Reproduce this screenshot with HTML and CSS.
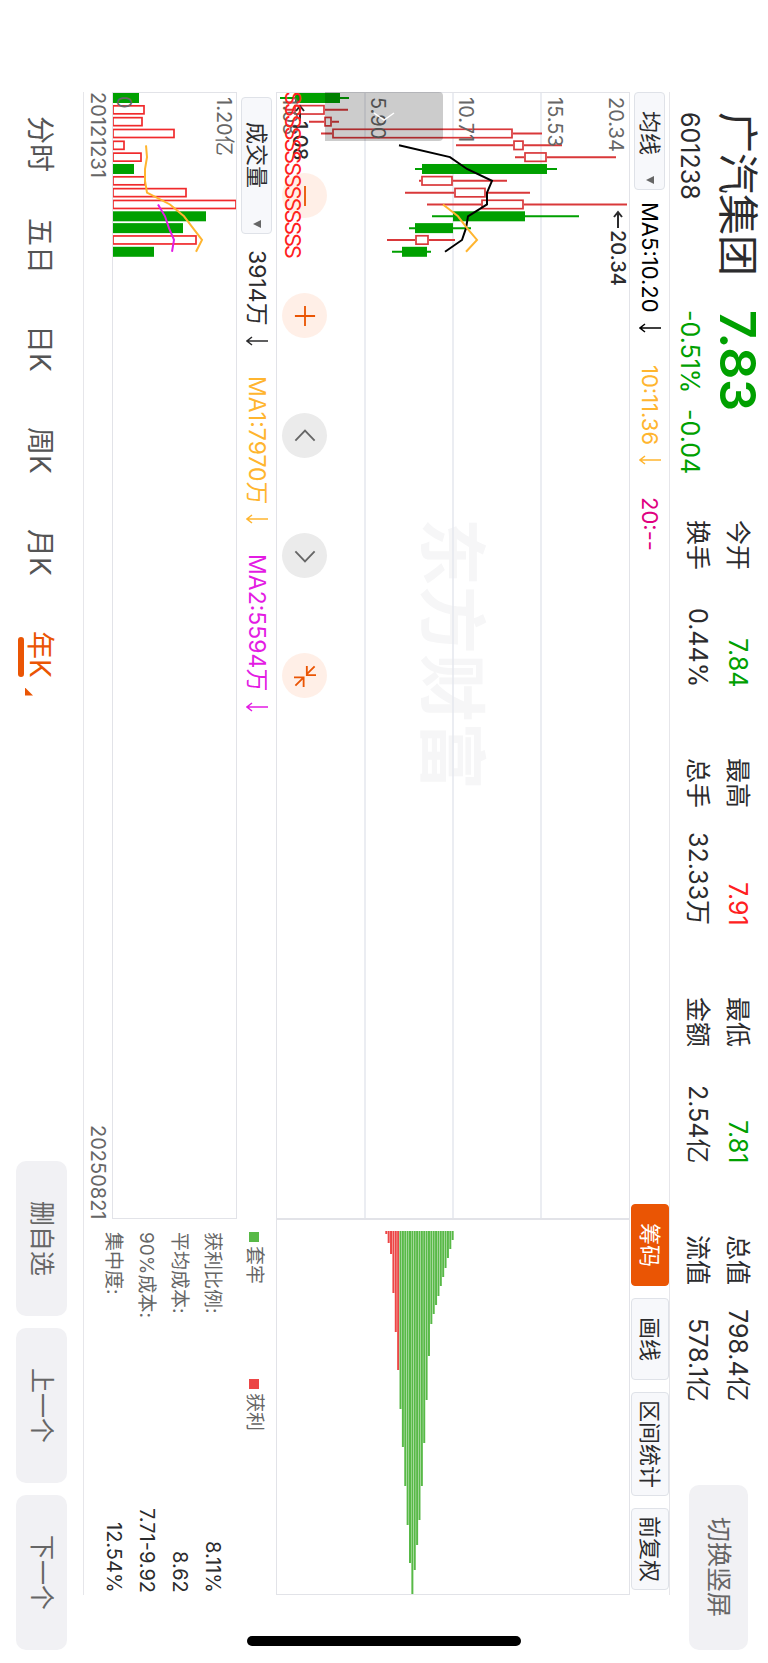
FILE: index.html
```html
<!DOCTYPE html>
<html lang="zh-CN">
<head>
    <meta charset="UTF-8">
    <meta name="viewport" content="width=device-width, initial-scale=1.0">
    <title>广汽集团 601238</title>
    <link rel="stylesheet" href="styles.css">
</head>
<body>
    <div class="app">
        <!-- Quote header -->
        <header class="header">
            <div class="stock">
                <h1 class="stock-name">广汽集团</h1>
                <div class="stock-code">601238</div>
            </div>
            <div class="price">
                <div class="price-now">7.83</div>
                <div class="price-change"><span>-0.51%</span><span>-0.04</span></div>
            </div>
            <dl class="stats">
                <div class="stat"><dt>今开</dt><dd class="down">7.84</dd></div>
                <div class="stat"><dt>最高</dt><dd class="up">7.91</dd></div>
                <div class="stat"><dt>最低</dt><dd class="down">7.81</dd></div>
                <div class="stat"><dt>总值</dt><dd>798.4亿</dd></div>
                <div class="stat"><dt>换手</dt><dd>0.44%</dd></div>
                <div class="stat"><dt>总手</dt><dd>32.33万</dd></div>
                <div class="stat"><dt>金额</dt><dd>2.54亿</dd></div>
                <div class="stat"><dt>流值</dt><dd>578.1亿</dd></div>
            </dl>
            <button class="soft-btn switch-btn" type="button">切换竖屏</button>
        </header>

        <!-- Charts -->
        <main class="panel">
            <div class="toolbar">
                <div class="picker">
                    <select class="picker-select" aria-label="主图指标">
                        <option>均线</option>
                    </select>
                </div>
                <div class="legend">
                    <span class="legend-item black">MA5:10.20<svg class="arrow" viewBox="0 0 22 10"><path d="M22 5H1M6 1L1 5l5 4"/></svg></span>
                    <span class="legend-item orange">10:11.36<svg class="arrow" viewBox="0 0 22 10"><path d="M22 5H1M6 1L1 5l5 4"/></svg></span>
                    <span class="legend-item pink">20:--</span>
                </div>
                <div class="tools">
                    <button class="tool-btn active" type="button">筹码</button>
                    <button class="tool-btn" type="button">画线</button>
                    <button class="tool-btn tight" type="button">区间统计</button>
                    <button class="tool-btn tight" type="button">前复权</button>
                </div>
            </div>

            <section class="kline">
                <svg class="chart" id="kline" viewBox="0 0 354 1126" preserveAspectRatio="xMidYMin meet"></svg>
                <button class="drawer-btn" type="button" aria-label="展开">
                    <svg viewBox="0 0 22 10"><path d="M1 1l10 7 10-7"/></svg>
                </button>
                <div class="zoom-tools">
                    <button class="round-btn" type="button" aria-label="缩小">
                        <svg viewBox="0 0 24 24"><path d="M12 1v22"/></svg>
                    </button>
                    <button class="round-btn" type="button" aria-label="放大">
                        <svg viewBox="0 0 24 24"><path d="M12 1v22M1 12h22"/></svg>
                    </button>
                    <button class="round-btn gray" type="button" aria-label="左移">
                        <svg viewBox="0 0 24 24"><path d="M1.500 17L12 6l10.500 11"/></svg>
                    </button>
                    <button class="round-btn gray" type="button" aria-label="右移">
                        <svg viewBox="0 0 24 24"><path d="M1.500 7L12 18 22.500 7"/></svg>
                    </button>
                    <button class="round-btn" type="button" aria-label="收起">
                        <svg viewBox="0 0 24 24"><path d="M22.500 1.500L14 10M14 1v10h10M1.500 22.500L10 14M0 13.500h10.500V24"/></svg>
                    </button>
                </div>
            </section>

            <section class="chips">
                <svg class="chart" id="chips" viewBox="0 0 354 376" preserveAspectRatio="xMidYMin meet"></svg>
            </section>

            <div class="volume-bar">
                <div class="picker wide">
                    <select class="picker-select" aria-label="副图指标">
                        <option>成交量</option>
                    </select>
                </div>
                <div class="legend">
                    <span class="legend-item">3914万<svg class="arrow" viewBox="0 0 22 10"><path d="M22 5H1M6 1L1 5l5 4"/></svg></span>
                    <span class="legend-item orange">MA1:7970万<svg class="arrow" viewBox="0 0 22 10"><path d="M22 5H1M6 1L1 5l5 4"/></svg></span>
                    <span class="legend-item magenta">MA2:5594万<svg class="arrow" viewBox="0 0 22 10"><path d="M22 5H1M6 1L1 5l5 4"/></svg></span>
                </div>
            </div>

            <section class="volume">
                <svg class="chart" id="volume" viewBox="0 0 125 1126" preserveAspectRatio="xMidYMin meet"></svg>
            </section>

            <div class="dates"><span>20121231</span><span>20250821</span></div>

            <aside class="cost">
                <div class="cost-legend">
                    <span class="cost-key trapped">套牢</span>
                    <span class="cost-key profit">获利</span>
                </div>
                <dl class="cost-list">
                    <div><dt>获利比例:</dt><dd>8.11%</dd></div>
                    <div><dt>平均成本:</dt><dd>8.62</dd></div>
                    <div><dt>90%成本:</dt><dd>7.71-9.92</dd></div>
                    <div><dt>集中度:</dt><dd>12.54%</dd></div>
                </dl>
            </aside>
        </main>

        <!-- Period tabs -->
        <footer class="footer">
            <nav class="tabs">
                <button class="tab" type="button">分时</button>
                <button class="tab" type="button">五日</button>
                <button class="tab" type="button">日K</button>
                <button class="tab" type="button">周K</button>
                <button class="tab" type="button">月K</button>
                <button class="tab active" type="button"><span>年K</span></button>
            </nav>
            <div class="actions">
                <button class="soft-btn" type="button">删自选</button>
                <button class="soft-btn" type="button">上一个</button>
                <button class="soft-btn" type="button">下一个</button>
            </div>
        </footer>

        <div class="home-indicator"></div>
    </div>

    <script src="charts.js"></script>
</body>
</html>
```
FILE: styles.css
```css
* {
    margin: 0;
    padding: 0;
    box-sizing: border-box;
}

/* The whole app is laid out sideways: inline = top to bottom, block = right to left */
html {
    writing-mode: vertical-rl;
    text-orientation: sideways;
}

body {
    font-family: Inter, "Noto Sans CJK SC", sans-serif;
    font-size: 22px;
    color: #2b2b2d;
    background: #fff;
    overflow: hidden;
}

button,
select {
    font: inherit;
    color: inherit;
    writing-mode: vertical-rl;
    text-orientation: sideways;
    border: none;
    background: none;
    cursor: pointer;
}

svg {
    display: block;
    writing-mode: horizontal-tb;
    fill: none;
    stroke: currentColor;
}

.app {
    position: relative;
    display: flex;
    flex-direction: column;
    inline-size: 100vh;
    block-size: 100vw;
}

/* Header */
.header {
    display: flex;
    align-items: flex-start;
    padding-block-start: 10px;
    padding-inline: 112px 13px;
    line-height: 40px;
    font-size: 25px;
}

.stock {
    flex: none;
    margin-inline-end: 34px;
}

.stock-name {
    font-size: 41px;
    font-weight: 400;
    line-height: 40px;
}

.stock-code,
.price-change {
    margin-block-start: 8px;
}

.price {
    flex: none;
    inline-size: 210px;
    color: #00a000;
}

.price-now {
    font-size: 50px;
    font-weight: 600;
}

.price-change {
    display: flex;
    gap: 16px;
}

.stats {
    flex: 1;
    display: grid;
    grid-template-columns: repeat(4, 1fr);
    column-gap: 71px;
    margin-inline-end: 83px;
}

.stat {
    display: flex;
    justify-content: space-between;
    white-space: nowrap;
}

.up {
    color: #ff2020;
}

.down {
    color: #00a000;
}

.soft-btn {
    flex: none;
    inline-size: 155px;
    block-size: 51px;
    border-radius: 10px;
    background: #f1f1f4;
    color: #666;
    font-size: 25px;
    line-height: 40px;
}

.switch-btn {
    inline-size: 165px;
    block-size: 59px;
    margin-block-start: 10px;
}

/* Chart panel */
.panel {
    flex: 1;
    min-block-size: 0;
    display: grid;
    grid-template-columns: 3fr 1fr;
    grid-template-rows: 39px minmax(0, 354fr) 39px minmax(0, 125fr) 28px;
    margin-inline: 92px 68px;
    border-block: 1px solid #e6e6ea;
}

.toolbar {
    grid-column: 1 / 3;
    display: flex;
    align-items: center;
}

.picker {
    position: relative;
    inline-size: 98px;
    block-size: 31px;
}

.picker.wide {
    inline-size: 137px;
}

.picker::after {
    content: "";
    position: absolute;
    inset-inline-end: 6px;
    inset-block-start: 11px;
    inline-size: 8px;
    block-size: 8px;
    background: #666;
    clip-path: polygon(0 50%, 100% 0, 100% 100%);
    pointer-events: none;
}

.picker-select {
    appearance: none;
    inline-size: 100%;
    block-size: 100%;
    padding-inline-start: 18px;
    border: 1px solid #dfe2e8;
    border-radius: 4px;
    background: #f7f8fb;
    line-height: 29px;
}

.wide .picker-select {
    padding-inline-start: 24px;
}

.legend {
    flex: 1;
    display: flex;
    gap: 32px;
    padding-inline-start: 12px;
}

.legend-item {
    display: flex;
    align-items: center;
    gap: 10px;
    line-height: 28px;
}

.arrow {
    width: 22px;
    height: 10px;
    stroke-width: 1.5;
}

.black { color: #000; }
.orange { color: #ffb52f; }
.pink { color: #e0007f; }
.magenta { color: #e31be3; }

.tools {
    display: flex;
    gap: 12px;
    margin-inline-end: 5px;
}

.tool-btn {
    block-size: 38px;
    padding-inline: 18px;
    border: 1px solid #dfe2e8;
    border-radius: 4px;
    background: #f7f8fb;
    line-height: 36px;
}

.tool-btn.tight {
    padding-inline: 7px;
}

.tool-btn.active {
    border-color: #ea5504;
    background: #ea5504;
    color: #fff;
}

/* Outlines keep the frame out of the charts' scale */
.kline,
.chips,
.volume {
    outline: 1px solid #e2e3e8;
    outline-offset: -1px;
}

.kline {
    position: relative;
}

.chart {
    width: 100%;
    height: 100%;
}

.chart text {
    fill: #666;
    stroke: none;
    font-size: 20px;
}

.chart .watermark {
    fill: #f6f6f7;
    font-size: 68px;
    font-weight: 700;
}

.chart .note {
    fill: #2b2b2d;
    font-weight: 500;
}

.chart .mark {
    fill: #ff2020;
    font-size: 22px;
    text-anchor: middle;
}

/* Floating controls over the k-line */
.drawer-btn {
    position: absolute;
    inset-inline-start: 0;
    inset-block-end: 49px;
    inline-size: 49px;
    block-size: 118px;
    display: flex;
    align-items: center;
    justify-content: center;
    border-radius: 0 4px 4px 0;
    background: rgba(0, 0, 0, 0.2);
    color: #fff;
}

.drawer-btn svg {
    width: 22px;
    height: 10px;
    stroke-width: 1.5;
}

.zoom-tools {
    position: absolute;
    inset-inline-start: 81px;
    inset-block-end: 6px;
    display: flex;
    gap: 75px;
}

.round-btn {
    display: flex;
    align-items: center;
    justify-content: center;
    inline-size: 45px;
    block-size: 45px;
    border-radius: 50%;
    background: rgba(255, 100, 20, 0.1);
    color: #ea5504;
}

.round-btn.gray {
    background: #ebebeb;
    color: #666;
}

.round-btn svg {
    width: 22px;
    height: 22px;
    stroke-width: 2;
}

/* Volume */
.volume-bar {
    display: flex;
    align-items: center;
    padding-inline-start: 5px;
}

.volume-bar .legend {
    padding-inline-start: 16px;
    gap: 30px;
    font-size: 23px;
}

.dates {
    display: flex;
    justify-content: space-between;
    font-size: 20px;
    line-height: 28px;
    color: #666;
}

/* Cost distribution summary */
.cost {
    grid-column: 2;
    grid-row: 3 / 6;
    padding-inline: 13px 2px;
    padding-block-start: 8px;
    font-size: 19px;
}

.cost-legend {
    display: grid;
    grid-template-columns: 147px 1fr;
    line-height: 28px;
    margin-block-end: 11px;
    color: #666;
}

.cost-key {
    display: flex;
    align-items: center;
    gap: 4px;
}

.cost-key::before {
    content: "";
    inline-size: 10px;
    block-size: 10px;
}

.trapped::before {
    background: #58b947;
}

.profit::before {
    background: #ec4646;
}

.cost-list div {
    display: flex;
    justify-content: space-between;
    line-height: 33px;
}

.cost-list dt {
    color: #666;
}

.cost-list dd {
    font-size: 20px;
}

/* Footer */
.footer {
    display: flex;
    align-items: center;
    justify-content: space-between;
    block-size: 83px;
    padding-inline: 93px 13px;
}

.tabs {
    display: flex;
    margin-block-start: 3px;
}

.tab {
    inline-size: 102px;
    font-size: 28px;
    line-height: 40px;
    color: #555;
}

.tab.active {
    color: #ea5504;
}

.tab span {
    position: relative;
}

.tab span::before {
    content: "";
    position: absolute;
    inset-inline-start: 6px;
    inset-block-end: -5px;
    inline-size: 40px;
    block-size: 6px;
    border-radius: 3px;
    background: #ea5504;
}

.tab span::after {
    content: "";
    position: absolute;
    inset-inline-start: 57px;
    inset-block-end: 2px;
    inline-size: 8px;
    block-size: 8px;
    background: #ea5504;
    clip-path: polygon(0 0, 100% 100%, 0 100%);
}

.actions {
    display: flex;
    gap: 12px;
}

.home-indicator {
    position: absolute;
    inset-inline-end: 17px;
    inset-block-start: 50%;
    inline-size: 10px;
    block-size: 274px;
    border-radius: 5px;
    background: #000;
    transform: translateX(50%);
}
```
FILE: charts.js
```js
const RED = '#d9383a';
const GREEN = '#00a000';
const STEP = 11.83;
const center = i => 6 + i * STEP;

// [up?, low, bodyLow, bodyHigh, high] measured from the chart's bottom edge
const candles = [
    [0, 4, 19, 64, 73],
    [1, 9, 18, 49, 72],
    [1, 33, 48, 56, 63],
    [1, 45, 56, 237, 266],
    [1, 180, 237, 248, 286],
    [1, 239, 248, 271, 340],
    [0, 139, 146, 271, 281],
    [1, 143, 145, 177, 231],
    [1, 129, 178, 210, 254],
    [1, 151, 205, 248, 351],
    [0, 156, 177, 249, 303],
    [0, 133, 139, 177, 195],
    [1, 111, 139, 153, 179],
    [0, 116, 126, 151, 155]
];
const ma5 = [null, null, null, null, 123, 174, 191, 216, 211, 211, 192, 190, 186, 169];
const ma10 = [null, null, null, null, null, null, null, null, null, 167, 182, 191, 201, 190];

const volumes = [27, 33, 31, 63, 13, 30, 22, 34, 75, 125, 94, 71, 85, 42];
const volMa1 = [null, null, null, null, 34, 35, 33, 33, 35, 58, 72, 81, 90, 84];
const volMa2 = [null, null, null, null, null, null, null, null, null, 46, 53, 57, 62, 60];

const chips = [
    15, 24, 35, 74, 113, 151,
    190, 228, 267, 306, 344, 375, 351, 326, 301, 267, 224, 181, 137,
    105, 95, 86, 77, 67, 58, 49, 39, 30, 21
];

// Everything is drawn in landscape coordinates and turned once
function render(id, height, content) {
    document.getElementById(id).innerHTML =
        `<g transform="translate(${height} 0) rotate(90)">${content}</g>`;
}

function line(data, height, color, width) {
    const points = data
        .map((v, i) => (v === null ? null : `${center(i)},${height - v}`))
        .filter(Boolean)
        .join(' ');
    return `<polyline points="${points}" stroke="${color}" stroke-width="${width}"/>`;
}

function label(x, y, text, cls = '') {
    return `<text x="${x}" y="${y}" class="${cls}">${text}</text>`;
}

function drawKline() {
    const h = 354;
    let out = label(426, 203, '东方财富', 'watermark');
    [89, 177, 265].forEach(y => {
        out += `<path d="M0 ${y}H1126" stroke="#e4e7ee" stroke-width="1.5"/>`;
    });
    candles.forEach(([up, low, from, to, high], i) => {
        const x = center(i);
        const color = up ? RED : GREEN;
        out += `<path d="M${x} ${h - low}V${h - from}M${x} ${h - to}V${h - high}" stroke="${color}" stroke-width="2"/>`;
        out += up
            ? `<rect x="${x - 4.2}" y="${h - to + 1}" width="8.4" height="${to - from - 2}" stroke="${color}" stroke-width="1.7"/>`
            : `<rect x="${x - 5}" y="${h - to}" width="10" height="${to - from}" fill="${color}" stroke="none"/>`;
    });
    out += line(ma5, h, '#000', 2) + line(ma10, h, '#ffb52f', 2);
    out += label(5, 21, '20.34') + label(5, 82, '15.53') + label(5, 171, '10.71');
    out += label(5, 259, '5.90') + label(5, 347, '1.08');
    out += label(138, 19, '20.34', 'note') + label(29, 337, '1.08', 'note');
    out += '<path d="M136 12H120M125 8l-5 4 5 4M29 330H14M19 326l-5 4 5 4" stroke="#2b2b2d" stroke-width="2"/>';
    candles.forEach((c, i) => {
        out += label(center(i), 345, 'S', 'mark');
    });
    render('kline', h, out);
}

function drawVolume() {
    const h = 125;
    let out = '';
    volumes.forEach((v, i) => {
        const x = center(i);
        out += candles[i][0]
            ? `<rect x="${x - 4}" y="${h - v + 1}" width="8" height="${v - 2}" stroke="#f02a2c" stroke-width="1.7"/>`
            : `<rect x="${x - 5}" y="${h - v}" width="10" height="${v}" fill="${GREEN}" stroke="none"/>`;
    });
    out += line(volMa1, h, '#ffb52f', 2) + line(volMa2, h, '#e31be3', 2);
    out += label(5, 20, '1.20亿') + label(4, 120, '0');
    render('volume', h, out);
}

function drawChips() {
    let out = '';
    chips.forEach((end, i) => {
        const y = 243.7 - i * 2.37;
        out += `<path d="M12 ${y}H${end}" stroke="${i < 6 ? '#ec4646' : '#58b947'}" stroke-width="2"/>`;
    });
    render('chips', 354, out);
}

drawKline();
drawVolume();
drawChips();
```
